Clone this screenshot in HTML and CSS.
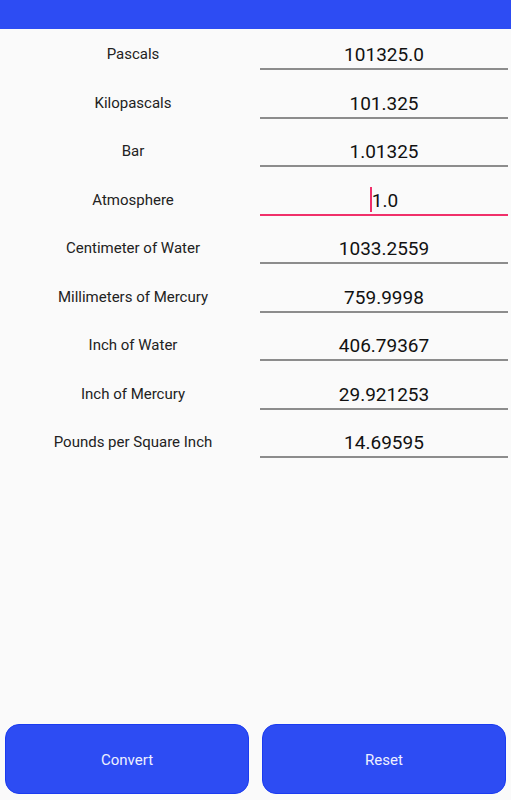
FILE: index.html
```html
<!DOCTYPE html>
<html lang="en">
<head>
    <meta charset="UTF-8">
    <meta name="viewport" content="width=device-width, initial-scale=1.0">
    <title>Pressure Converter</title>
    <link rel="stylesheet" href="styles.css">
</head>
<body>
    <div class="app-bar"></div>

    <div class="units">
        <div class="unit-row">
            <label class="unit-label">Pascals</label>
            <div class="unit-value">101325.0</div>
        </div>
        <div class="unit-row">
            <label class="unit-label">Kilopascals</label>
            <div class="unit-value">101.325</div>
        </div>
        <div class="unit-row">
            <label class="unit-label">Bar</label>
            <div class="unit-value">1.01325</div>
        </div>
        <div class="unit-row">
            <label class="unit-label">Atmosphere</label>
            <div class="unit-value focused"><span class="caret"></span>1.0</div>
        </div>
        <div class="unit-row">
            <label class="unit-label">Centimeter of Water</label>
            <div class="unit-value">1033.2559</div>
        </div>
        <div class="unit-row">
            <label class="unit-label">Millimeters of Mercury</label>
            <div class="unit-value">759.9998</div>
        </div>
        <div class="unit-row">
            <label class="unit-label">Inch of Water</label>
            <div class="unit-value">406.79367</div>
        </div>
        <div class="unit-row">
            <label class="unit-label">Inch of Mercury</label>
            <div class="unit-value">29.921253</div>
        </div>
        <div class="unit-row">
            <label class="unit-label">Pounds per Square Inch</label>
            <div class="unit-value">14.69595</div>
        </div>
    </div>

    <div class="actions">
        <button type="button">Convert</button>
        <button type="button">Reset</button>
    </div>
</body>
</html>
```

FILE: styles.css
```css
html, body {
    height: 100%;
}
body {
    font-family: Roboto, "Liberation Sans", sans-serif;
    background-color: #fafafa;
    color: #222;
    margin: 0;
    padding: 0;
    display: flex;
    flex-direction: column;
}
.app-bar {
    height: 29px;
    background-color: #2d4cf3;
    flex-shrink: 0;
}
.units {
    flex: 1;
}
.unit-row {
    display: grid;
    grid-template-columns: 260px 248px;
    height: 48.5px;
}
.unit-label {
    font-size: 15px;
    color: #222;
    text-align: center;
    padding-top: 16px;
    padding-left: 6px;
}
.unit-value {
    position: relative;
    font-size: 19px;
    color: #111;
    text-align: center;
    height: 39px;
    line-height: 52px;
    border-bottom: 2px solid #8c8c8c;
}
.unit-value.focused {
    border-bottom: 2px solid #f0306a;
}
.caret {
    display: inline-block;
    width: 2px;
    height: 25px;
    background-color: #f0306a;
    vertical-align: -5px;
}
.actions {
    display: flex;
    gap: 13px;
    padding: 0 5px 6px 5px;
}
button {
    flex: 1;
    height: 70px;
    background-color: #2d4cf3;
    color: #eef0ff;
    border: 1px solid #1a3bf0;
    border-radius: 14px;
    font-family: Roboto, "Liberation Sans", sans-serif;
    font-size: 15px;
    padding-top: 3px;
    cursor: pointer;
}
```
